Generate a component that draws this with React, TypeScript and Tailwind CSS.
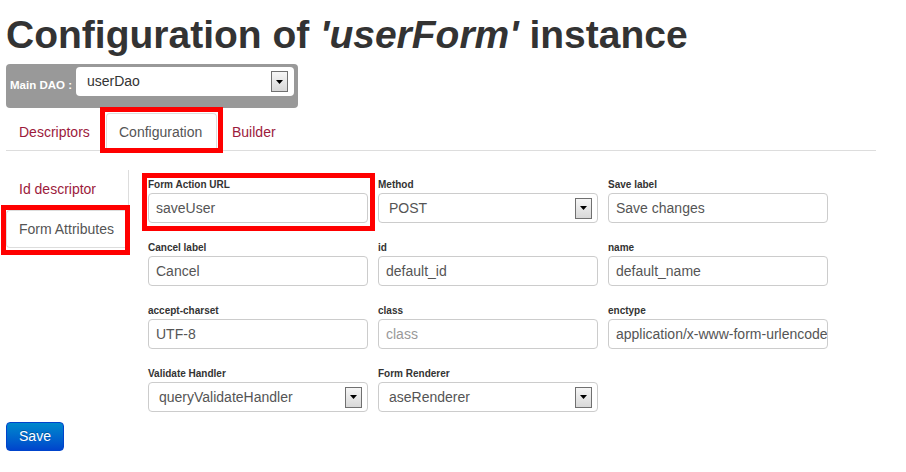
import React from "react";

const RED = "border-[5px] border-[#ff0000]";

function DropButton() {
  return (
    <span className="flex h-[21px] w-[17px] items-center justify-center border border-[#707070] bg-gradient-to-b from-[#f6f6f6] to-[#d8d8d8]">
      <svg width="7" height="4" viewBox="0 0 7 4">
        <path d="M0 0h7L3.5 4z" fill="#000" />
      </svg>
    </span>
  );
}

function Field({ label, value, placeholder, select, highlight }: { label: string; value?: string; placeholder?: string; select?: boolean; highlight?: boolean }) {
  return (
    <div className="relative">
      <div className="text-[10px] font-bold leading-[14px] text-[#333] mb-px">{label}</div>
      <div className={`flex h-[30px] items-center overflow-hidden whitespace-nowrap rounded border border-[#ccc] bg-white text-[14px] ${select ? "pl-[10px] pr-[5px]" : "pl-[7px]"}`}>
        <span className={`flex-1 overflow-hidden ${value ? "text-[#555]" : "text-[#999]"}`}>{value || placeholder}</span>
        {select && <DropButton />}
      </div>
      {highlight && <div className={`absolute -left-[6px] -top-[5px] -right-[7px] -bottom-[8px] ${RED}`} />}
    </div>
  );
}

export default function App() {
  return (
    <div className="min-h-[472px] bg-white pl-[6px] pr-[30px] font-['Liberation_Sans',Arial,sans-serif] text-[#333]">
      <h1 className="pt-[15px] text-[39px] font-bold leading-[39px] text-[#333]">
        Configuration of <i>'userForm'</i> instance
      </h1>

      {/* Main DAO selector */}
      <div className="mt-[10px] flex h-[44px] w-[292px] items-start rounded bg-[#999] pl-[4px] pt-[3px]">
        <span className="mr-[4px] pt-[11px] text-[11.5px] font-bold leading-[14px] text-white">Main DAO :</span>
        <div className="flex h-[29px] w-[218px] items-center rounded bg-white pl-[11px] pr-[6px] text-[14px] text-[#333]">
          <span className="flex-1">userDao</span>
          <DropButton />
        </div>
      </div>

      {/* Tabs */}
      <ul className="mt-[5px] flex w-[870px] border-b border-[#ddd] text-[14px] leading-[20px]">
        <li className="-mb-px mr-[2px]">
          <a className="block w-[98px] border border-transparent px-[12px] py-[8px] text-[#9c1a3c]">Descriptors</a>
        </li>
        <li className="relative -mb-px mr-[2px]">
          <a className="block w-[111px] rounded-t border border-[#ddd] border-b-white bg-white px-[12px] py-[8px] text-[#555]">Configuration</a>
          <div className={`absolute -left-[6px] -top-[6px] -right-[6px] -bottom-[2px] ${RED}`} />
        </li>
        <li className="-mb-px">
          <a className="block border border-transparent px-[12px] py-[8px] text-[#9c1a3c]">Builder</a>
        </li>
      </ul>

      <div className="mt-[19px] flex items-start">
        {/* Left nav */}
        <ul className="flex w-[123px] flex-col border-r border-[#ddd] text-[14px] leading-[20px]">
          <li className="mb-[2px] -mr-px">
            <a className="block border border-transparent px-[12px] py-[8px] text-[#9c1a3c]">Id descriptor</a>
          </li>
          <li className="relative -mr-px">
            <a className="block rounded-l border border-[#ddd] border-r-white bg-white px-[12px] py-[8px] text-[#555]">Form Attributes</a>
            <div className={`absolute -left-[5px] -top-[5px] -right-[1px] -bottom-[7px] ${RED}`} />
          </li>
        </ul>

        {/* Fields */}
        <div className="ml-[19px] grid grid-cols-[220px_220px_220px] gap-x-[10px] gap-y-[18px] pt-[8px]">
          <Field label="Form Action URL" value="saveUser" highlight />
          <Field label="Method" value="POST" select />
          <Field label="Save label" value="Save changes" />
          <Field label="Cancel label" value="Cancel" />
          <Field label="id" value="default_id" />
          <Field label="name" value="default_name" />
          <Field label="accept-charset" value="UTF-8" />
          <Field label="class" placeholder="class" />
          <Field label="enctype" value="application/x-www-form-urlencoded" />
          <Field label="Validate Handler" value="queryValidateHandler" select />
          <Field label="Form Renderer" value="aseRenderer" select />
        </div>
      </div>

      <button className="mt-[10px] h-[29px] w-[58px] rounded border border-[#0044cc] bg-gradient-to-b from-[#0088cc] to-[#0044cc] text-[14px] text-white [text-shadow:0_-1px_0_rgba(0,0,0,0.25)]">
        Save
      </button>
    </div>
  );
}
